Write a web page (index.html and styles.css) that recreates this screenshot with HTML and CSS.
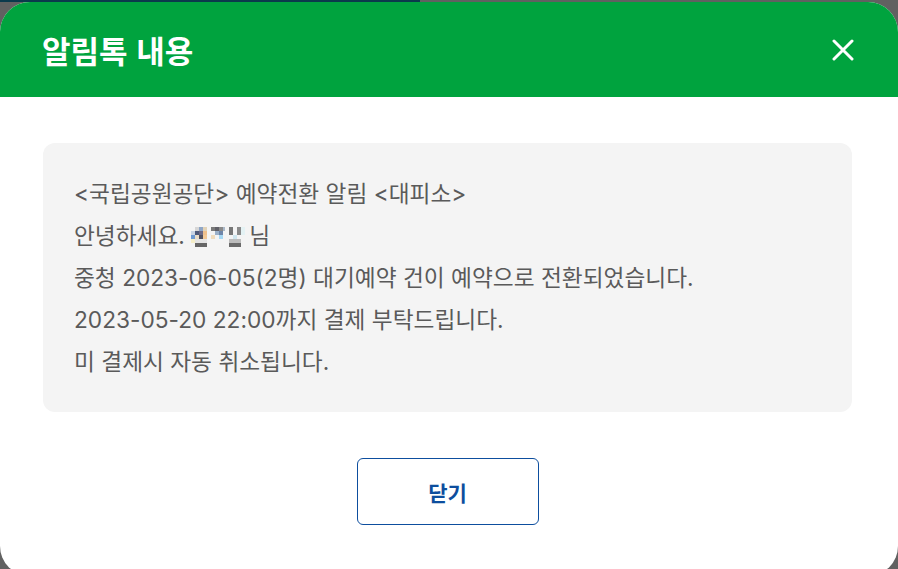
FILE: index.html
```html
<!DOCTYPE html>
<html lang="ko">
<head>
  <meta charset="UTF-8">
  <meta name="viewport" content="width=device-width, initial-scale=1.0">
  <title>알림톡 내용</title>
  <link rel="stylesheet" href="styles.css">
</head>
<body>

  <div class="page-strip"></div>

  <div class="modal">

    <div class="modal-header">
      <h2 class="modal-title">알림톡 내용</h2>
      <button class="close-btn" aria-label="닫기">
        <svg width="22" height="22" viewBox="0 0 22 22">
          <path d="M2 2 L20 20 M20 2 L2 20" stroke="#fff" stroke-width="3" stroke-linecap="round" fill="none"/>
        </svg>
      </button>
    </div>

    <div class="modal-body">
      <div class="message-box">
        <p>&lt;국립공원공단&gt; 예약전환 알림 &lt;대피소&gt;</p>
        <p>안녕하세요. <svg class="masked-name" width="58" height="20" viewBox="0 0 58 20">
            <!-- pixelated name -->
            <rect x="4" y="0" width="4" height="4" fill="#d6d6d6"/>
            <rect x="8" y="0" width="4" height="4" fill="#8fa6c6"/>
            <rect x="12" y="0" width="4" height="4" fill="#e2d3b8"/>
            <rect x="0" y="4" width="4" height="4" fill="#c8d4e4"/>
            <rect x="4" y="4" width="4" height="4" fill="#4d5878"/>
            <rect x="8" y="4" width="4" height="4" fill="#6d6a86"/>
            <rect x="12" y="4" width="4" height="4" fill="#efc08c"/>
            <rect x="0" y="8" width="4" height="4" fill="#6e9ad2"/>
            <rect x="4" y="8" width="4" height="4" fill="#e8dcc8"/>
            <rect x="8" y="8" width="4" height="4" fill="#505060"/>
            <rect x="12" y="8" width="4" height="4" fill="#f2c896"/>
            <rect x="0" y="12" width="4" height="4" fill="#f5eec8"/>
            <rect x="4" y="12" width="12" height="4" fill="#e4e4e4"/>
            <rect x="4" y="16" width="12" height="4" fill="#666"/>
            <rect x="20" y="0" width="4" height="4" fill="#7a7a7a"/>
            <rect x="24" y="0" width="4" height="4" fill="#606068"/>
            <rect x="28" y="0" width="4" height="4" fill="#8a8a8a"/>
            <rect x="32" y="0" width="2" height="4" fill="#aab8c8"/>
            <rect x="24" y="4" width="4" height="4" fill="#9ab0c8"/>
            <rect x="28" y="4" width="4" height="4" fill="#6e86aa"/>
            <rect x="20" y="8" width="4" height="4" fill="#f0dcbc"/>
            <rect x="28" y="8" width="4" height="4" fill="#a6d8f4"/>
            <rect x="38" y="0" width="4" height="8" fill="#767676"/>
            <rect x="46" y="0" width="4" height="8" fill="#8a8a8a"/>
            <rect x="50" y="0" width="4" height="8" fill="#e4f2f4"/>
            <rect x="42" y="8" width="4" height="4" fill="#cfe6ee"/>
            <rect x="38" y="12" width="12" height="4" fill="#bcbcbc"/>
            <rect x="38" y="16" width="12" height="4" fill="#6a6a6a"/>
          </svg>님</p>
        <p>중청 2023-06-05(2명) 대기예약 건이 예약으로 전환되었습니다.</p>
        <p>2023-05-20 22:00까지 결제 부탁드립니다.</p>
        <p>미 결제시 자동 취소됩니다.</p>
      </div>

      <div class="modal-actions">
        <button class="btn-outline">닫기</button>
      </div>
    </div>

  </div>

</body>
</html>
```

FILE: styles.css
```css
body {
  margin: 0;
  background-color: #616161; /* dimmed page */
  font-family: Inter, "Noto Sans CJK KR", sans-serif;
  overflow: hidden;
}

.page-strip {
  width: 420px;
  height: 2px;
  background-color: #0b3a4c;
}

.modal {
  width: 898px;
  height: 574px;
  background-color: #fff;
  border-radius: 30px;
  overflow: hidden;
}

.modal-header {
  height: 95px;
  background-color: #00a33e; /* green */
  display: flex;
  align-items: center;
  justify-content: space-between;
  padding: 0 44px 0 42px;
}

.modal-title {
  margin: 0;
  color: #fff;
  font-family: "Noto Sans CJK KR", sans-serif;
  font-size: 31px;
  font-weight: 700;
}

.close-btn {
  background: none;
  border: none;
  padding: 0;
  width: 22px;
  height: 22px;
  cursor: pointer;
  display: flex;
}

.modal-body {
  padding: 46px 46px 0 43px;
}

.message-box {
  background-color: #f4f4f4;
  border-radius: 12px;
  padding: 30px 31px 29px;
}

.message-box p {
  margin: 0;
  font-size: 22.7px;
  line-height: 42px;
  color: #5a5a5a;
}

.masked-name {
  vertical-align: -3px;
}

.modal-actions {
  display: flex;
  justify-content: center;
  margin-top: 46px;
}

.btn-outline {
  width: 182px;
  height: 67px;
  background-color: #fff;
  border: 1px solid #0d4e9e;
  border-radius: 6px;
  color: #0d4e9e;
  font-family: "Noto Sans CJK KR", sans-serif;
  font-size: 21px;
  font-weight: 700;
  cursor: pointer;
}
```
